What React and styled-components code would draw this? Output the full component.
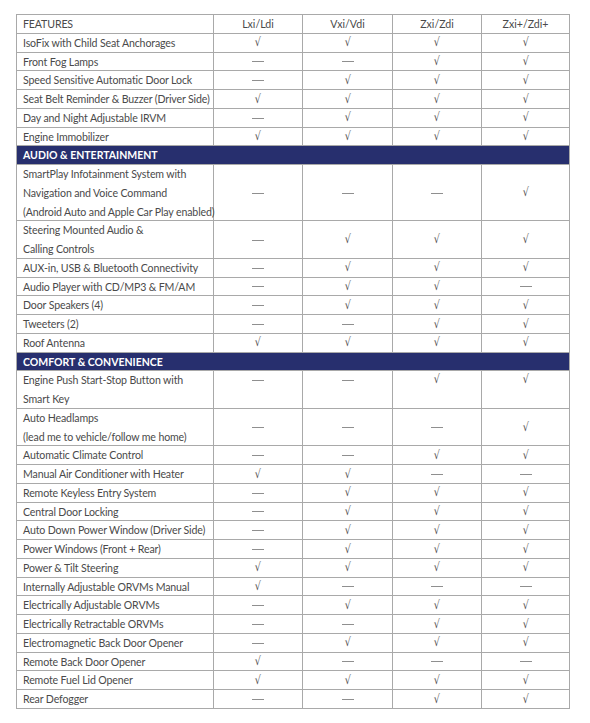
import React from "react";
import styled, { createGlobalStyle } from "styled-components";

const U = 18.76;

const Global = createGlobalStyle`
  html, body { margin: 0; padding: 0; background: #ffffff; }
  body { font-family: "Lato", "Open Sans", sans-serif; }
`;

const Page = styled.div`
  padding: 14px 0 0 16px;
  width: 590px;
  box-sizing: border-box;
`;

const Table = styled.div`
  width: 554px;
  border-top: 1px solid #a9a9a9;
  border-left: 1px solid #a9a9a9;
  border-right: 1px solid #a9a9a9;
  box-sizing: border-box;
`;

const Row = styled.div`
  display: grid;
  grid-template-columns: 197px 89px 90px 89px 1fr;
  height: ${(p) => p.$lines * U}px;
  border-bottom: 1px solid #a9a9a9;
  box-sizing: border-box;
`;

const FeatureCell = styled.div`
  border-right: 1px solid #a9a9a9;
  padding-left: 6px;
  font-size: 10.6px;
  letter-spacing: -0.14px;
  line-height: ${U}px;
  color: #4a4a4a;
  white-space: nowrap;
  text-transform: ${(p) => (p.$upper ? "uppercase" : "none")};
`;

const ValueCell = styled.div`
  border-right: ${(p) => (p.$last ? "none" : "1px solid #a9a9a9")};
  display: flex;
  justify-content: center;
  align-items: ${(p) => (p.$top ? "flex-start" : "center")};
  line-height: ${U - 1}px;
  font-size: 10.6px;
  color: #4a4a4a;
`;

const Check = styled.span`
  font-family: "DejaVu Sans", sans-serif;
  font-size: 12px;
  color: #505050;
  display: inline-block;
  transform: scaleX(0.8);
`;

const Dash = styled.span`
  display: inline-block;
  width: 12px;
  height: 1px;
  background: #8f8f8f;
  align-self: ${(p) => (p.$top ? "flex-start" : "center")};
  margin-top: ${(p) => (p.$top ? `${U / 2 - 1}px` : "0")};
`;

const Band = styled.div`
  height: ${U}px;
  background: #272f6e;
  color: #ffffff;
  font-weight: 700;
  font-size: 10.5px;
  line-height: ${U}px;
  padding-left: 6px;
  border-bottom: 1px solid #a9a9a9;
  box-sizing: border-box;
`;

const Y = 1;
const N = 0;

const sections = [
  {
    title: null,
    rows: [
      ["IsoFix with Child Seat Anchorages", [Y, Y, Y, Y]],
      ["Front Fog Lamps", [N, N, Y, Y]],
      ["Speed Sensitive Automatic Door Lock", [N, Y, Y, Y]],
      ["Seat Belt Reminder & Buzzer (Driver Side)", [Y, Y, Y, Y]],
      ["Day and Night Adjustable IRVM", [N, Y, Y, Y]],
      ["Engine Immobilizer", [Y, Y, Y, Y]],
    ],
  },
  {
    title: "AUDIO & ENTERTAINMENT",
    rows: [
      [
        [
          "SmartPlay Infotainment System with",
          "Navigation and Voice Command",
          "(Android Auto and Apple Car Play enabled)",
        ],
        [N, N, N, Y],
      ],
      [["Steering Mounted Audio &", "Calling Controls"], [N, Y, Y, Y]],
      ["AUX-in, USB & Bluetooth Connectivity", [N, Y, Y, Y]],
      ["Audio Player with CD/MP3 & FM/AM", [N, Y, Y, N]],
      ["Door Speakers (4)", [N, Y, Y, Y]],
      ["Tweeters (2)", [N, N, Y, Y]],
      ["Roof Antenna", [Y, Y, Y, Y]],
    ],
  },
  {
    title: "COMFORT & CONVENIENCE",
    rows: [
      [["Engine Push Start-Stop Button with", "Smart Key"], [N, N, Y, Y], true],
      [["Auto Headlamps", "(lead me to vehicle/follow me home)"], [N, N, N, Y]],
      ["Automatic Climate Control", [N, N, Y, Y]],
      ["Manual Air Conditioner with Heater", [Y, Y, N, N]],
      ["Remote Keyless Entry System", [N, Y, Y, Y]],
      ["Central Door Locking", [N, Y, Y, Y]],
      ["Auto Down Power Window (Driver Side)", [N, Y, Y, Y]],
      ["Power Windows (Front + Rear)", [N, Y, Y, Y]],
      ["Power & Tilt Steering", [Y, Y, Y, Y]],
      ["Internally Adjustable ORVMs Manual", [Y, N, N, N]],
      ["Electrically Adjustable ORVMs", [N, Y, Y, Y]],
      ["Electrically Retractable ORVMs", [N, N, Y, Y]],
      ["Electromagnetic Back Door Opener", [N, Y, Y, Y]],
      ["Remote Back Door Opener", [Y, N, N, N]],
      ["Remote Fuel Lid Opener", [Y, Y, Y, Y]],
      ["Rear Defogger", [N, N, Y, Y]],
    ],
  },
];

const variants = ["Lxi/Ldi", "Vxi/Vdi", "Zxi/Zdi", "Zxi+/Zdi+"];

function Mark({ v, top }) {
  if (v) return <Check>√</Check>;
  return <Dash $top={top} />;
}

function FeatureRow({ label, values, top }) {
  const lines = Array.isArray(label) ? label : [label];
  return (
    <Row $lines={lines.length}>
      <FeatureCell>
        {lines.map((l, i) => (
          <div key={i}>{l}</div>
        ))}
      </FeatureCell>
      {values.map((v, i) => (
        <ValueCell key={i} $last={i === 3} $top={top}>
          <Mark v={v} top={top} />
        </ValueCell>
      ))}
    </Row>
  );
}

export default function App() {
  return (
    <>
      <Global />
      <Page>
        <Table>
          <Row $lines={1}>
            <FeatureCell $upper>Features</FeatureCell>
            {variants.map((v, i) => (
              <ValueCell key={v} $last={i === 3}>
                {v}
              </ValueCell>
            ))}
          </Row>
          {sections.map((s, si) => (
            <React.Fragment key={si}>
              {s.title && <Band>{s.title}</Band>}
              {s.rows.map(([label, values, top], ri) => (
                <FeatureRow key={ri} label={label} values={values} top={top} />
              ))}
            </React.Fragment>
          ))}
        </Table>
      </Page>
    </>
  );
}
